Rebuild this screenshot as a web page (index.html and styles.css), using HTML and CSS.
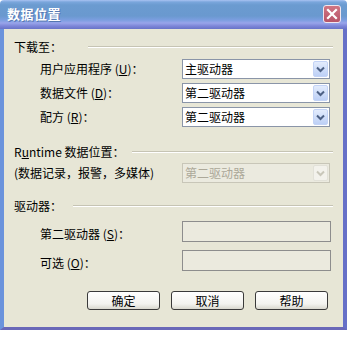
FILE: index.html
```html
<!DOCTYPE html>
<html>
<head>
<meta charset="utf-8">
<link rel="stylesheet" href="styles.css">
</head>
<body>
<div class="window">
  <div class="titlebar">
    <span class="title">数据位置</span>
    <span class="close"><svg width="12" height="12" viewBox="0 0 12 12"><path d="M2 2 L10 10 M10 2 L2 10" stroke="#fff" stroke-width="2.2" stroke-linecap="square"/></svg></span>
  </div>
  <div class="frame">
    <div class="client">
      <div class="group-head">
        <span class="head-label w1">下载至：</span><span class="rule"></span>
      </div>
      <div class="row first">
        <span class="label">用户应用程序 (<u>U</u>)：</span>
        <div class="combo"><span class="combo-text">主驱动器</span><span class="drop"><svg width="9" height="7" viewBox="0 0 9 7"><path d="M1 1.5 L4.5 5 L8 1.5" fill="none" stroke="#4d6185" stroke-width="2"/></svg></span></div>
      </div>
      <div class="row">
        <span class="label">数据文件 (<u>D</u>)：</span>
        <div class="combo"><span class="combo-text">第二驱动器</span><span class="drop"><svg width="9" height="7" viewBox="0 0 9 7"><path d="M1 1.5 L4.5 5 L8 1.5" fill="none" stroke="#4d6185" stroke-width="2"/></svg></span></div>
      </div>
      <div class="row">
        <span class="label">配方 (<u>R</u>)：</span>
        <div class="combo"><span class="combo-text">第二驱动器</span><span class="drop"><svg width="9" height="7" viewBox="0 0 9 7"><path d="M1 1.5 L4.5 5 L8 1.5" fill="none" stroke="#4d6185" stroke-width="2"/></svg></span></div>
      </div>

      <div class="group-head g2">
        <span class="head-label w2">R<u>u</u>ntime 数据位置：</span><span class="rule"></span>
      </div>
      <div class="row flush">
        <span class="label">(数据记录，报警，多媒体)</span>
        <div class="combo disabled"><span class="combo-text">第二驱动器</span><span class="drop"><svg width="9" height="7" viewBox="0 0 9 7"><path d="M1 1.5 L4.5 5 L8 1.5" fill="none" stroke="#c9c7ba" stroke-width="2"/></svg></span></div>
      </div>

      <div class="group-head g3">
        <span class="head-label w3">驱动器：</span><span class="rule"></span>
      </div>
      <div class="row tb first-tb">
        <span class="label">第二驱动器 (<u>S</u>)：</span>
        <div class="textbox"></div>
      </div>
      <div class="row tb">
        <span class="label">可选 (<u>O</u>)：</span>
        <div class="textbox"></div>
      </div>

      <div class="buttons">
        <button class="btn">确定</button>
        <button class="btn">取消</button>
        <button class="btn">帮助</button>
      </div>
    </div>
  </div>
</div>
</body>
</html>
```

FILE: styles.css
```css
html, body {
  margin: 0;
  padding: 0;
  background: #ffffff;
}
body {
  font-family: "Noto Sans CJK SC", "Noto Sans", sans-serif;
  font-size: 12px;
  color: #000;
}
.window {
  width: 347px;
}
.titlebar {
  height: 29px;
  box-sizing: border-box;
  display: flex;
  align-items: center;
  justify-content: space-between;
  padding: 0 6px 2px 7px;
  background: linear-gradient(to bottom, #a9c3f2 0px, #7aa6dc 2px, #6b9bd0 5px, #6a99cf 16px, #7b9ee0 20px, #98a4ea 23px, #7d86d8 26px, #6873c8 29px);
  border-radius: 4px 4px 0 0;
}
.title {
  color: #ffffff;
  font-weight: bold;
  font-size: 13px;
  line-height: 16px;
  letter-spacing: 0.5px;
  text-shadow: 1px 1px 0 #5476b0;
}
.close {
  width: 18px;
  height: 18px;
  box-sizing: border-box;
  border: 1px solid #f2e6ee;
  border-radius: 3px;
  background: linear-gradient(to bottom, #cf7584, #b75467);
  display: flex;
  align-items: center;
  justify-content: center;
}
.frame {
  height: 301px;
  box-sizing: border-box;
  border-left: 4px solid #6b93dc;
  border-right: 4px solid #6670c8;
  border-bottom: 3px solid #6a68b8;
  background: #e7e6d6;
}
.client {
  padding: 11px 10px 0 10px;
}
.group-head {
  display: flex;
  align-items: center;
  height: 14px;
  line-height: 14px;
}
.group-head.g2 { margin-top: 18px; }
.group-head.g3 { margin-top: 16px; }
.head-label { flex: none; white-space: nowrap; }
.head-label.w1 { width: 74px; }
.head-label.w2 { width: 118px; }
.head-label.w3 { width: 59px; }
.rule {
  flex: 1;
  height: 0;
  border-top: 1px solid #c6c4b4;
  border-bottom: 1px solid #ffffff;
}
.row {
  display: grid;
  grid-template-columns: 142px 148px;
  align-items: center;
  padding-left: 26px;
  height: 20px;
  margin-top: 4px;
}
.row.first { margin-top: 5px; }
.row.flush { padding-left: 0; grid-template-columns: 168px 148px; }
.row.tb { height: 21px; margin-top: 8px; grid-template-columns: 142px 149px; }
.row.tb .label { padding-top: 5px; }
.label { white-space: nowrap; line-height: 14px; }
.combo {
  height: 20px;
  box-sizing: border-box;
  border: 1px solid #8a95a8;
  background: #ffffff;
  display: flex;
  align-items: center;
  padding: 0 1px 0 2px;
}
.combo-text { flex: 1; line-height: 14px; }
.drop {
  width: 15px;
  height: 16px;
  box-sizing: border-box;
  border: 1px solid #c3d3f6;
  border-radius: 2px;
  background: linear-gradient(to bottom, #e3ecfd, #bdd0f6);
  display: flex;
  align-items: center;
  justify-content: center;
}
.combo.disabled {
  border-color: #c8c6b8;
  background: #ebeadf;
  color: #aca899;
}
.combo.disabled .drop {
  border-color: #e2e1d8;
  background: #f3f2ec;
}
.textbox {
  height: 21px;
  box-sizing: border-box;
  border: 1px solid #8d8d8d;
  background: #ebeade;
}
.buttons {
  display: flex;
  justify-content: flex-end;
  gap: 11px;
  margin-top: 20px;
  padding-right: 5px;
}
.btn {
  width: 73px;
  height: 19px;
  box-sizing: border-box;
  border: 1px solid #3a3a3a;
  border-radius: 3px;
  background: linear-gradient(to bottom, #ffffff, #f3f3ef 70%, #d9d8ce);
  font-family: "Noto Sans CJK SC", "Noto Sans", sans-serif;
  font-size: 12px;
  line-height: 14px;
  padding: 0;
  color: #000;
}
```
